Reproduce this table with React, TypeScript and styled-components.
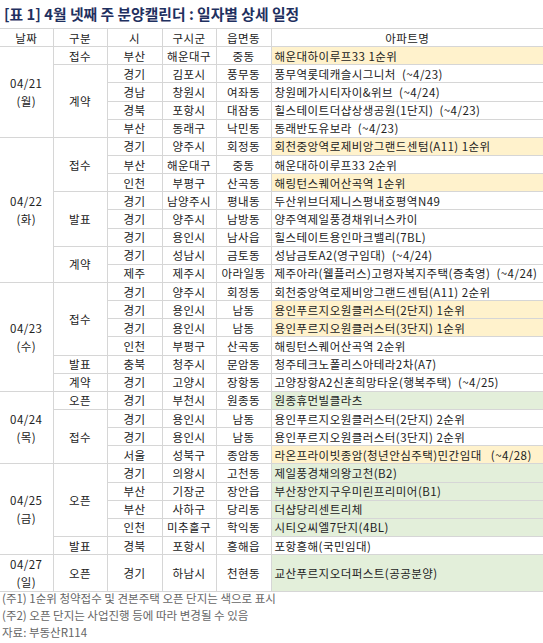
import React from 'react';
import styled, { createGlobalStyle } from 'styled-components';

type Tone = 'none' | 'yellow' | 'green';

interface Row {
  sido: string;
  gu: string;
  dong: string;
  name: string;
  tone?: Tone;
}

interface Group {
  kind: string;
  rows: Row[];
}

interface Day {
  date: string;
  weekday: string;
  tall?: boolean;
  groups: Group[];
}

const days: Day[] = [
  {
    date: '04/21',
    weekday: '(월)',
    groups: [
      { kind: '접수', rows: [{ sido: '부산', gu: '해운대구', dong: '중동', name: '해운대하이루프33 1순위', tone: 'yellow' }] },
      {
        kind: '계약',
        rows: [
          { sido: '경기', gu: '김포시', dong: '풍무동', name: '풍무역롯데캐슬시그니처  (~4/23)' },
          { sido: '경남', gu: '창원시', dong: '여좌동', name: '창원메가시티자이&위브  (~4/24)' },
          { sido: '경북', gu: '포항시', dong: '대잠동', name: '힐스테이트더샵상생공원(1단지)  (~4/23)' },
          { sido: '부산', gu: '동래구', dong: '낙민동', name: '동래반도유보라  (~4/23)' },
        ],
      },
    ],
  },
  {
    date: '04/22',
    weekday: '(화)',
    groups: [
      {
        kind: '접수',
        rows: [
          { sido: '경기', gu: '양주시', dong: '회정동', name: '회천중앙역로제비앙그랜드센텀(A11) 1순위', tone: 'yellow' },
          { sido: '부산', gu: '해운대구', dong: '중동', name: '해운대하이루프33 2순위' },
          { sido: '인천', gu: '부평구', dong: '산곡동', name: '해링턴스퀘어산곡역 1순위', tone: 'yellow' },
        ],
      },
      {
        kind: '발표',
        rows: [
          { sido: '경기', gu: '남양주시', dong: '평내동', name: '두산위브더제니스평내호평역N49' },
          { sido: '경기', gu: '양주시', dong: '남방동', name: '양주역제일풍경채위너스카이' },
          { sido: '경기', gu: '용인시', dong: '남사읍', name: '힐스테이트용인마크밸리(7BL)' },
        ],
      },
      {
        kind: '계약',
        rows: [
          { sido: '경기', gu: '성남시', dong: '금토동', name: '성남금토A2(영구임대)  (~4/24)' },
          { sido: '제주', gu: '제주시', dong: '아라일동', name: '제주아라(웰플러스)고령자복지주택(증축영)  (~4/24)' },
        ],
      },
    ],
  },
  {
    date: '04/23',
    weekday: '(수)',
    groups: [
      {
        kind: '접수',
        rows: [
          { sido: '경기', gu: '양주시', dong: '회정동', name: '회천중앙역로제비앙그랜드센텀(A11) 2순위' },
          { sido: '경기', gu: '용인시', dong: '남동', name: '용인푸르지오원클러스터(2단지) 1순위', tone: 'yellow' },
          { sido: '경기', gu: '용인시', dong: '남동', name: '용인푸르지오원클러스터(3단지) 1순위', tone: 'yellow' },
          { sido: '인천', gu: '부평구', dong: '산곡동', name: '해링턴스퀘어산곡역 2순위' },
        ],
      },
      { kind: '발표', rows: [{ sido: '충북', gu: '청주시', dong: '문암동', name: '청주테크노폴리스아테라2차(A7)' }] },
      { kind: '계약', rows: [{ sido: '경기', gu: '고양시', dong: '장항동', name: '고양장항A2신혼희망타운(행복주택)  (~4/25)' }] },
    ],
  },
  {
    date: '04/24',
    weekday: '(목)',
    groups: [
      { kind: '오픈', rows: [{ sido: '경기', gu: '부천시', dong: '원종동', name: '원종휴먼빌클라츠', tone: 'green' }] },
      {
        kind: '접수',
        rows: [
          { sido: '경기', gu: '용인시', dong: '남동', name: '용인푸르지오원클러스터(2단지) 2순위' },
          { sido: '경기', gu: '용인시', dong: '남동', name: '용인푸르지오원클러스터(3단지) 2순위' },
          { sido: '서울', gu: '성북구', dong: '종암동', name: '라온프라이빗종암(청년안심주택)민간임대   (~4/28)', tone: 'yellow' },
        ],
      },
    ],
  },
  {
    date: '04/25',
    weekday: '(금)',
    groups: [
      {
        kind: '오픈',
        rows: [
          { sido: '경기', gu: '의왕시', dong: '고천동', name: '제일풍경채의왕고천(B2)', tone: 'green' },
          { sido: '부산', gu: '기장군', dong: '장안읍', name: '부산장안지구우미린프리미어(B1)', tone: 'green' },
          { sido: '부산', gu: '사하구', dong: '당리동', name: '더샵당리센트리체', tone: 'green' },
          { sido: '인천', gu: '미추홀구', dong: '학익동', name: '시티오씨엘7단지(4BL)', tone: 'green' },
        ],
      },
      { kind: '발표', rows: [{ sido: '경북', gu: '포항시', dong: '흥해읍', name: '포항흥해(국민임대)' }] },
    ],
  },
  {
    date: '04/27',
    weekday: '(일)',
    tall: true,
    groups: [
      { kind: '오픈', rows: [{ sido: '경기', gu: '하남시', dong: '천현동', name: '교산푸르지오더퍼스트(공공분양)', tone: 'green' }] },
    ],
  },
];

const notes = [
  '(주1) 1순위 청약접수 및 견본주택 오픈 단지는 색으로 표시',
  '(주2) 오픈 단지는 사업진행 등에 따라 변경될 수 있음',
  '자료: 부동산R114',
];

const GlobalStyle = createGlobalStyle`
  html, body {
    margin: 0;
    padding: 0;
    background: #ffffff;
  }
  body {
    font-family: "Noto Sans CJK KR", "Noto Sans", sans-serif;
    color: #222222;
  }
`;

const Page = styled.div`
  width: 543px;
  display: flex;
  flex-direction: column;
`;

const Title = styled.h1`
  margin: 0;
  height: 28px;
  padding: 0 0 2px 4px;
  display: flex;
  align-items: center;
  font-size: 14.8px;
  font-weight: 700;
  color: #1f3060;
  box-sizing: border-box;
`;

const Table = styled.table`
  width: 543px;
  table-layout: fixed;
  border-collapse: collapse;
  font-size: 11.5px;
  letter-spacing: 0.45px;
`;

const HeadCell = styled.th`
  font-weight: 400;
  text-align: center;
  vertical-align: middle;
  padding: 0;
  line-height: 16px;
  border: 1px solid #d6d6d6;
  border-left: none;
  &:last-child {
    border-right: none;
  }
`;

const BodyRow = styled.tr<{ $tall?: boolean }>`
  height: ${({ $tall }) => ($tall ? '36.3px' : '18.15px')};
`;

const Cell = styled.td`
  text-align: center;
  vertical-align: middle;
  padding: 0;
  line-height: 16px;
  white-space: nowrap;
  border: 1px solid #d6d6d6;
  border-left: none;
`;

const DateCell = styled(Cell)`
  line-height: 18px;
  white-space: normal;
`;

const NameCell = styled(Cell)<{ $tone: Tone }>`
  text-align: left;
  padding-left: 3px;
  white-space: pre;
  overflow: hidden;
  border-right: none;
  background: ${({ $tone }) =>
    $tone === 'yellow' ? '#fff2cc' : $tone === 'green' ? '#e3efda' : 'transparent'};
`;

const Notes = styled.div`
  margin-top: -2px;
  padding-left: 2px;
  display: flex;
  flex-direction: column;
  font-size: 11.5px;
  line-height: 17px;
  color: #666666;
`;

export default function App() {
  return (
    <Page>
      <GlobalStyle />
      <Title>[표 1] 4월 넷째 주 분양캘린더 : 일자별 상세 일정</Title>
      <Table>
        <colgroup>
          <col style={{ width: 53 }} />
          <col style={{ width: 54 }} />
          <col style={{ width: 55 }} />
          <col style={{ width: 54 }} />
          <col style={{ width: 55 }} />
          <col />
        </colgroup>
        <thead>
          <BodyRow>
            <HeadCell>날짜</HeadCell>
            <HeadCell>구분</HeadCell>
            <HeadCell>시</HeadCell>
            <HeadCell>구시군</HeadCell>
            <HeadCell>읍면동</HeadCell>
            <HeadCell>아파트명</HeadCell>
          </BodyRow>
        </thead>
        <tbody>
          {days.map((day) => {
            const total = day.groups.reduce((n, g) => n + g.rows.length, 0);
            return day.groups.map((group, gi) =>
              group.rows.map((row, ri) => (
                <BodyRow key={`${day.date}-${gi}-${ri}`} $tall={day.tall}>
                  {gi === 0 && ri === 0 && (
                    <DateCell rowSpan={total}>
                      {day.date}
                      <br />
                      {day.weekday}
                    </DateCell>
                  )}
                  {ri === 0 && <Cell rowSpan={group.rows.length}>{group.kind}</Cell>}
                  <Cell>{row.sido}</Cell>
                  <Cell>{row.gu}</Cell>
                  <Cell>{row.dong}</Cell>
                  <NameCell $tone={row.tone ?? 'none'}>{row.name}</NameCell>
                </BodyRow>
              ))
            );
          })}
        </tbody>
      </Table>
      <Notes>
        {notes.map((n) => (
          <span key={n}>{n}</span>
        ))}
      </Notes>
    </Page>
  );
}
